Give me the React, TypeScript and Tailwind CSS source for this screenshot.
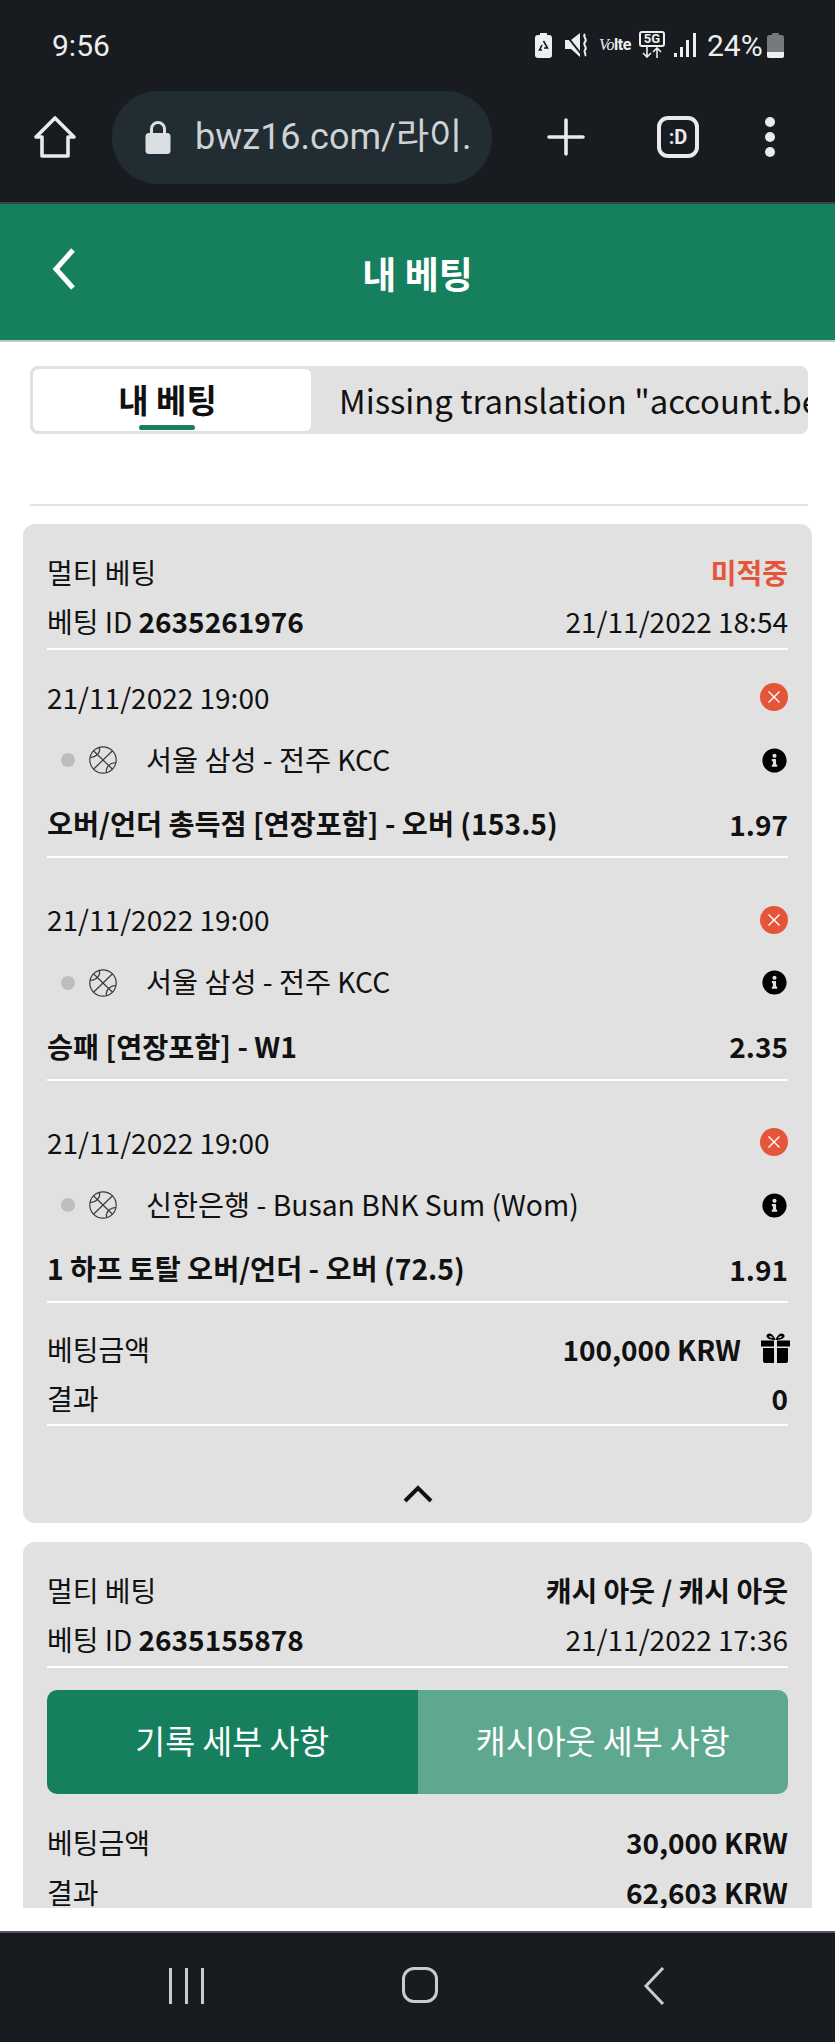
import React from "react";
import { FaInfoCircle } from "react-icons/fa";

function Line() {
  return <div className="h-[2px] bg-white" />;
}

function Basketball() {
  return (
    <svg width="30" height="30" viewBox="0 0 30 30" fill="none" stroke="#3a3a3a" strokeWidth="1.2">
      <circle cx="15" cy="15" r="13.2" />
      <path d="M5.5 5.8 L24.5 24.2" />
      <path d="M24.5 5.8 L5.5 24.2" />
      <path d="M11.5 2.3 C12.5 7.5 9 12 2.2 12.5" />
      <path d="M27.8 17.5 C21 18 17.5 22.5 18.5 27.7" />
    </svg>
  );
}

function XCircle() {
  return (
    <svg width="28" height="28" viewBox="0 0 28 28">
      <circle cx="14" cy="14" r="14" fill="#e4553a" />
      <path d="M8.5 8.5 L19.5 19.5 M19.5 8.5 L8.5 19.5" stroke="#fff" strokeWidth="1.4" fill="none" />
    </svg>
  );
}

function Gift() {
  return (
    <svg width="29" height="30" viewBox="0 0 29 30" fill="#000">
      <path d="M14.5 7 C11 7 6 6 5.5 3.5 C5 0.5 9 -0.5 11 1.5 C12.5 3 14 5 14.5 7 C15 5 16.5 3 18 1.5 C20 -0.5 24 0.5 23.5 3.5 C23 6 18 7 14.5 7 Z M8 3.5 C8.5 4.5 10.5 5 12 5 C11 3.5 9 2 8 3.5 Z M21 3.5 C20.5 4.5 18.5 5 17 5 C18 3.5 20 2 21 3.5 Z" fillRule="evenodd" />
      <path d="M0 7.5 H13 V13.5 H0 Z M16 7.5 H29 V13.5 H16 Z" />
      <path d="M2 15 H13 V30 H4 A2 2 0 0 1 2 28 Z M16 15 H27 V28 A2 2 0 0 1 25 30 H16 Z" />
    </svg>
  );
}

function Leg({ team, market, odds }: { team: string; market: string; odds: string }) {
  return (
    <div className="pt-[24px] pb-[14.5px]">
      <div className="h-[50px] pb-[5px] flex items-center justify-between">
        <span>21/11/2022 19:00</span>
        <span className="mt-[1px]"><XCircle /></span>
      </div>
      <div className="h-[72px] flex items-center">
        <span className="w-[14px] h-[14px] rounded-full bg-[#bdbdbd] ml-[14px]" />
        <span className="ml-[13px]"><Basketball /></span>
        <span className="ml-[28px] flex-1 text-[28.3px] -translate-y-[1px]">{team}</span>
        <FaInfoCircle className="text-[25px] text-black mr-[1px]" />
      </div>
      <div className="h-[60px] pb-[5px] flex items-center justify-between font-bold">
        <span className="text-[28.3px]">{market}</span>
        <span>{odds}</span>
      </div>
      <Line />
    </div>
  );
}

function HeadRows({ right, rightClass, id, time }: { right: string; rightClass: string; id: string; time: string }) {
  return (
    <>
      <div className="h-[50px] pb-[2px] flex items-center justify-between">
        <span>멀티 베팅</span>
        <span className={rightClass}>{right}</span>
      </div>
      <div className="h-[50px] pb-[5px] flex items-center justify-between">
        <span>베팅 ID <b className="font-bold">{id}</b></span>
        <span>{time}</span>
      </div>
      <Line />
    </>
  );
}

export default function App() {
  return (
    <div className="w-[835px] h-[2042px] flex flex-col bg-white overflow-hidden font-['Noto_Sans_CJK_KR',sans-serif] text-[#111]">
      {/* system + browser chrome */}
      <div className="h-[204px] bg-[#181c20] border-b-[2px] border-[#3c4247] shrink-0">
        <div className="h-[90px] flex items-center pl-[52px] pr-[51px] text-[#eceeef] font-['Roboto',sans-serif] text-[30px]">
          <span className="flex-1">9:56</span>
          <svg width="17" height="25" viewBox="0 0 17 25" className="mr-[13px]">
            <rect x="5" y="0" width="7" height="3" fill="#eceeef" />
            <rect x="0" y="2" width="17" height="23" rx="3" fill="#eceeef" />
            <path d="M8.5 8 L12.5 15 H9 M7 17 H4.5 L7 12" stroke="#181c20" strokeWidth="1.6" fill="none" />
          </svg>
          <svg width="26" height="24" viewBox="0 0 26 24" className="mr-[8px]">
            <path d="M0 7 H6 L15 0 V24 L6 16 H0 Z" fill="#eceeef" />
            <path d="M1 2 L17 22" stroke="#181c20" strokeWidth="2" />
            <path d="M20 1 C17 4 23 6 20 9 C17 12 23 14 20 17 C18 19 22 21 20 23" stroke="#eceeef" strokeWidth="2" fill="none" />
          </svg>
          <span className="w-[33px] mr-[7px] whitespace-nowrap leading-none text-[16px] font-bold tracking-[-0.5px]"><i className="font-['Liberation_Serif',serif] font-normal text-[16px]">Vo</i>lte</span>
          <div className="w-[26px] h-[28px] mr-[9px] flex flex-col items-center">
            <span className="w-[26px] h-[16px] rounded-[3px] border-[2px] border-[#eceeef] text-[13px] leading-[12px] font-bold text-center">5G</span>
            <svg width="22" height="11" viewBox="0 0 22 11">
              <path d="M6 0 V10 M2 6 L6 10 L10 6 M16 11 V1 M12 5 L16 1 L20 5" stroke="#eceeef" strokeWidth="1.6" fill="none" />
            </svg>
          </div>
          <svg width="22" height="24" viewBox="0 0 22 24" className="mr-[11px]">
            <rect x="0" y="20" width="3" height="4" fill="#eceeef" />
            <rect x="6" y="14" width="3" height="10" fill="#eceeef" />
            <rect x="12" y="7" width="3" height="17" fill="#eceeef" />
            <rect x="19" y="0" width="3" height="24" fill="#eceeef" />
          </svg>
          <span className="w-[56px] whitespace-nowrap">24%</span>
          <svg width="17" height="25" viewBox="0 0 17 25" className="ml-[4px]">
            <rect x="5" y="0" width="7" height="3" rx="1" fill="#77797b" />
            <rect x="0" y="2" width="17" height="23" rx="2.5" fill="#77797b" />
            <path d="M0 19 H17 V22.5 A2.5 2.5 0 0 1 14.5 25 H2.5 A2.5 2.5 0 0 1 0 22.5 Z" fill="#eceeef" />
          </svg>
        </div>
        <div className="h-[94px] flex items-center relative">
          <svg width="44" height="44" viewBox="0 0 44 44" className="ml-[33px]" fill="none" stroke="#e8eaeb" strokeWidth="3.6" strokeLinejoin="round">
            <path d="M22 3 L41 22 H35 V41 H9 V22 H3 Z" />
          </svg>
          <div className="ml-[35px] w-[380px] h-[93px] rounded-[46px] bg-[#222c33] flex items-center overflow-hidden">
            <svg width="26" height="34" viewBox="0 0 26 34" className="ml-[33px] shrink-0">
              <path d="M6.5 14 V9 A6.5 6.5 0 0 1 19.5 9 V14" stroke="#dcdfe1" strokeWidth="3" fill="none" />
              <rect x="0.5" y="13" width="25" height="21" rx="3.5" fill="#dcdfe1" />
            </svg>
            <span className="ml-[24px] text-[36px] text-[#ced2d5] whitespace-nowrap font-['Roboto','Noto_Sans_CJK_KR',sans-serif]">bwz16.com/라이.</span>
          </div>
          <svg width="38" height="38" viewBox="0 0 38 38" className="ml-[55px]" stroke="#e8eaeb" strokeWidth="3.6" strokeLinecap="round">
            <path d="M19 2 V36 M2 19 H36" />
          </svg>
          <div className="ml-[72px] w-[42px] h-[42px] rounded-[11px] border-[4px] border-[#e8eaeb] text-[#e8eaeb] flex items-center justify-center text-[20px] font-bold font-['Roboto',sans-serif]">:D</div>
          <div className="ml-[66px] flex flex-col gap-[5px]">
            <span className="w-[10px] h-[10px] rounded-full bg-[#e8eaeb]" />
            <span className="w-[10px] h-[10px] rounded-full bg-[#e8eaeb]" />
            <span className="w-[10px] h-[10px] rounded-full bg-[#e8eaeb]" />
          </div>
        </div>
      </div>
      {/* green page header */}
      <div className="h-[138px] bg-[#16805e] border-b-[2px] border-[#b9cdc7] shrink-0 flex items-center relative">
        <svg width="26" height="42" viewBox="0 0 26 42" className="ml-[51px] -mt-[6px]" fill="none" stroke="#fff" strokeWidth="5">
          <path d="M22 2 L5 21 L22 40" />
        </svg>
        <span className="absolute left-0 right-0 text-center text-white font-bold text-[37px] leading-none pt-[2px]">내 베팅</span>
      </div>
      {/* scrolling content */}
      <div className="h-[1566px] shrink-0 overflow-hidden text-[28px]">
        <div className="mt-[24px] ml-[30px] mr-[27px] h-[68px] rounded-[8px] bg-[#e1e1e1] p-[3px] flex overflow-hidden">
          <div className="relative w-[278px] h-[62px] rounded-[6px] bg-white shrink-0 flex items-center justify-center font-bold text-[33px] pr-[9px]">
            내 베팅
            <span className="absolute left-[106px] bottom-[1px] w-[56px] h-[5px] rounded-full bg-[#16805e]" />
          </div>
          <div className="ml-[28px] h-[62px] flex items-center whitespace-nowrap text-[32.8px]">Missing translation "account.bets.cashout"</div>
        </div>
        <div className="mt-[70px] ml-[30px] mr-[27px] h-[2px] bg-[#e3e3e3]" />
        <div className="mt-[18px] mx-[23px] h-[999px] rounded-[12px] bg-[#e1e1e1] px-[24px] pt-[24px]">
          <HeadRows right="미적중" rightClass="font-bold text-[#e4553a]" id="2635261976" time="21/11/2022 18:54" />
          <Leg team="서울 삼성 - 전주 KCC" market="오버/언더 총득점 [연장포함] - 오버 (153.5)" odds="1.97" />
          <Leg team="서울 삼성 - 전주 KCC" market="승패 [연장포함] - W1" odds="2.35" />
          <Leg team="신한은행 - Busan BNK Sum (Wom)" market="1 하프 토탈 오버/언더 - 오버 (72.5)" odds="1.91" />
          <div className="mt-[8px] h-[49px] pb-[3px] flex items-center justify-between">
            <span>베팅금액</span>
            <span className="flex items-center font-bold">100,000 KRW<span className="ml-[20px] -mr-[2px] -mt-[2px]"><Gift /></span></span>
          </div>
          <div className="h-[49px] pb-[3px] flex items-center justify-between">
            <span>결과</span>
            <span className="font-bold">0</span>
          </div>
          <Line />
          <div className="flex justify-center pt-[59px]">
            <svg width="30" height="18" viewBox="0 0 30 18" fill="none" stroke="#111" strokeWidth="4">
              <path d="M2 16 L15 3 L28 16" />
            </svg>
          </div>
        </div>
        <div className="mt-[19px] mx-[23px] h-[400px] rounded-t-[12px] bg-[#e1e1e1] px-[24px] pt-[24px]">
          <HeadRows right="캐시 아웃 / 캐시 아웃" rightClass="font-bold" id="2635155878" time="21/11/2022 17:36" />
          <div className="mt-[22px] h-[104px] rounded-[10px] overflow-hidden flex text-white text-[32.5px]">
            <div className="w-1/2 bg-[#16805e] pb-[3px] flex items-center justify-center">기록 세부 사항</div>
            <div className="w-1/2 bg-[#5ea88f] pb-[3px] flex items-center justify-center">캐시아웃 세부 사항</div>
          </div>
          <div className="mt-[25px] h-[50px] pb-[5px] flex items-center justify-between">
            <span>베팅금액</span>
            <span className="font-bold">30,000 KRW</span>
          </div>
          <div className="h-[50px] pb-[5px] flex items-center justify-between">
            <span>결과</span>
            <span className="font-bold">62,603 KRW</span>
          </div>
        </div>
      </div>
      <div className="h-[23px] shrink-0" />
      {/* android nav */}
      <div className="flex-1 bg-[#181c20] border-t-[2px] border-[#50565b] flex items-start pt-[34px] relative">
        <div className="ml-[169px] mt-[1px] flex gap-[13px]">
          <span className="w-[3px] h-[36px] bg-[#c9cbcc]" />
          <span className="w-[3px] h-[36px] bg-[#c9cbcc]" />
          <span className="w-[3px] h-[36px] bg-[#c9cbcc]" />
        </div>
        <div className="ml-[198px] w-[36px] h-[36px] rounded-[12px] border-[3px] border-[#c9cbcc]" />
        <svg width="22" height="38" viewBox="0 0 22 38" className="ml-[205px]" fill="none" stroke="#c9cbcc" strokeWidth="3">
          <path d="M20 1 L3 19 L20 37" />
        </svg>
      </div>
    </div>
  );
}
